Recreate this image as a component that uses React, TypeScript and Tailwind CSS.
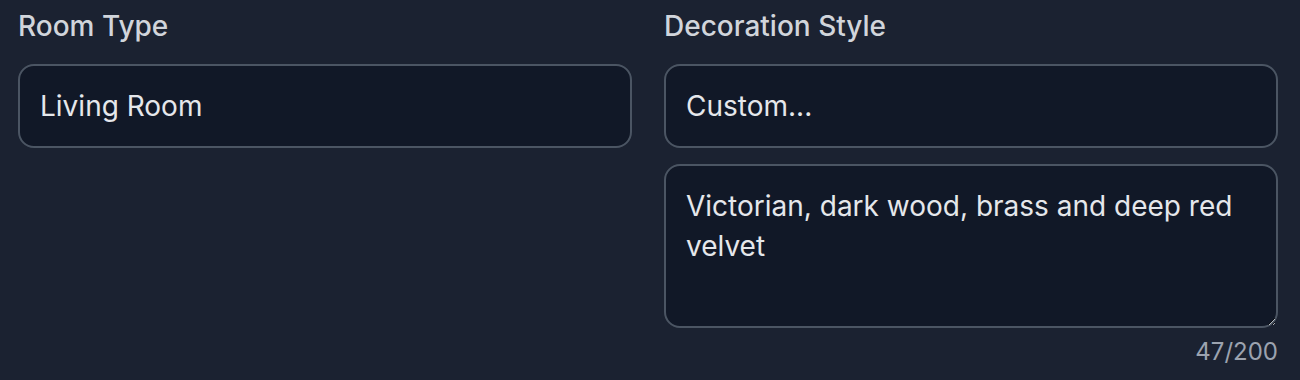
import { useState } from "react";

const font = { fontFamily: "Inter, 'Noto Sans', sans-serif" };

export default function App() {
  const [room, setRoom] = useState("Living Room");
  const [style, setStyle] = useState("Custom...");
  const [custom, setCustom] = useState("Victorian, dark wood, brass and deep red velvet");

  return (
    <div className="min-h-[380px] w-[1300px] bg-[#1b2231] pl-[18px] pt-[8px]" style={font}>
      <div className="grid w-[1260px] grid-cols-2 gap-[32px]">
        {/* Room type */}
        <div className="flex flex-col">
          <label className="mb-[20px] text-[28px] leading-[36px] font-medium text-[#d1d5db]">Room Type</label>
          <input
            value={room}
            onChange={(e) => setRoom(e.target.value)}
            className="h-[84px] rounded-[16px] border-2 border-[#4b5563] bg-[#111827] px-[20px] text-[28px] text-[#e5e7eb] outline-none"
          />
        </div>

        {/* Decoration style */}
        <div className="flex flex-col">
          <label className="mb-[20px] text-[28px] leading-[36px] font-medium text-[#d1d5db]">Decoration Style</label>
          <input
            value={style}
            onChange={(e) => setStyle(e.target.value)}
            className="h-[84px] rounded-[16px] border-2 border-[#4b5563] bg-[#111827] px-[20px] text-[28px] text-[#e5e7eb] outline-none"
          />
          <textarea
            value={custom}
            maxLength={200}
            onChange={(e) => setCustom(e.target.value)}
            className="mt-[16px] h-[164px] rounded-[16px] border-2 border-[#4b5563] bg-[#111827] px-[20px] pt-[20px] pb-[16px] text-[28px] leading-[40px] text-[#e5e7eb] outline-none"
          />
          <div className="mt-[8px] text-right text-[24px] leading-[32px] text-[#9ca3af]">{custom.length}/200</div>
        </div>
      </div>
    </div>
  );
}
